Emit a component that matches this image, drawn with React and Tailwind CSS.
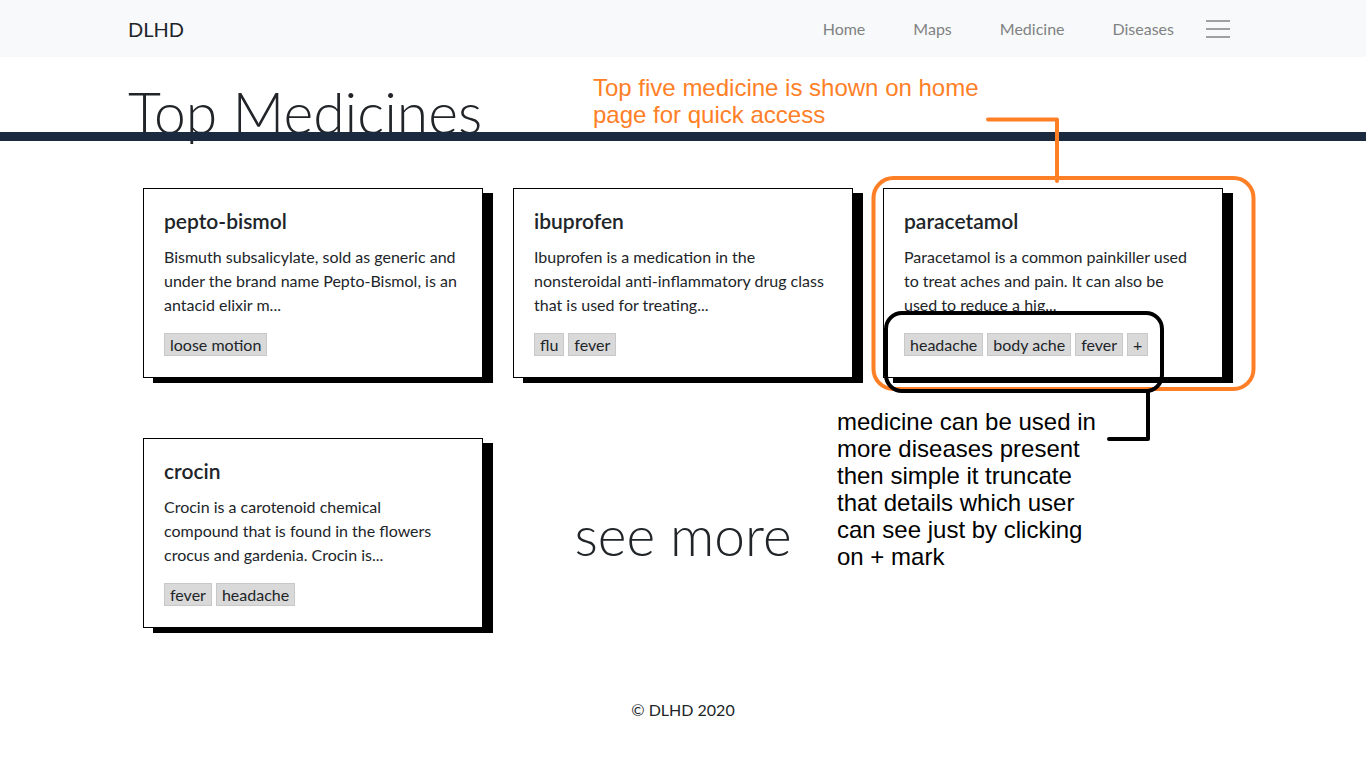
import React from 'react';

const medicines = [
  {
    name: 'pepto-bismol',
    lines: ['Bismuth subsalicylate, sold as generic and', 'under the brand name Pepto-Bismol, is an', 'antacid elixir m...'],
    tags: ['loose motion'],
  },
  {
    name: 'ibuprofen',
    lines: ['Ibuprofen is a medication in the', 'nonsteroidal anti-inflammatory drug class', 'that is used for treating...'],
    tags: ['flu', 'fever'],
  },
  {
    name: 'paracetamol',
    lines: ['Paracetamol is a common painkiller used', 'to treat aches and pain. It can also be', 'used to reduce a hig...'],
    tags: ['headache', 'body ache', 'fever', '+'],
  },
  {
    name: 'crocin',
    lines: ['Crocin is a carotenoid chemical', 'compound that is found in the flowers', 'crocus and gardenia. Crocin is...'],
    tags: ['fever', 'headache'],
  },
];

function MedicineCard({ med }) {
  return (
    <div className="h-[190px] w-[340px] border border-black bg-white px-5 pt-5 pb-[21px] shadow-[10px_5px_0_0_#000]">
      <h5 className="h-6 text-[21px] leading-6 font-semibold text-[#212529]">{med.name}</h5>
      <p className="mt-3 text-[16px] leading-6 whitespace-nowrap text-[#212529]">
        {med.lines.map((l, i) => (
          <span key={i} className="block">{l}</span>
        ))}
      </p>
      <div className="mt-4 flex gap-1">
        {med.tags.map((t) => (
          <span key={t} className="h-[23px] border border-[#c8c8c8] bg-[#d9d9d9] px-[5px] text-[16px] leading-[21px] text-[#212529]">
            {t}
          </span>
        ))}
      </div>
    </div>
  );
}

export default function App() {
  return (
    <div className="relative min-h-[768px] w-full bg-white font-['Lato','Open_Sans',sans-serif] text-[#212529]">
      {/* navbar */}
      <nav className="h-[57px] bg-[#f8f9fa]">
        <div className="mx-auto flex h-full w-[1110px] items-center justify-between">
          <span className="text-[20px] text-[#212529]">DLHD</span>
          <div className="flex items-center">
            <div className="flex gap-12 text-[16px] text-[#808283]">
              <a>Home</a>
              <a>Maps</a>
              <a>Medicine</a>
              <a>Diseases</a>
            </div>
            <button className="mr-2 ml-8 flex w-6 flex-col gap-[6px]">
              <span className="h-[2px] w-6 bg-[#a0a0a0]" />
              <span className="h-[2px] w-6 bg-[#a0a0a0]" />
              <span className="h-[2px] w-6 bg-[#a0a0a0]" />
            </button>
          </div>
        </div>
      </nav>

      {/* heading + bar */}
      <div className="mx-auto mt-[22px] h-[53px] w-[1110px]">
        <h1 className="text-[57px] leading-[67px] font-light text-[#212529]">Top Medicines</h1>
      </div>
      <div className="relative h-[9px] bg-[#1c2a3f]" />

      {/* cards */}
      <div className="mx-auto mt-[47px] w-[1110px] pl-[15px]">
        <div className="grid grid-cols-[340px_340px_340px] gap-x-[30px] gap-y-[60px]">
          <MedicineCard med={medicines[0]} />
          <MedicineCard med={medicines[1]} />
          <MedicineCard med={medicines[2]} />
          <MedicineCard med={medicines[3]} />
          <div className="flex items-center justify-center pt-1">
            <span className="text-[55px] font-light text-[#212529]">see more</span>
          </div>
        </div>
      </div>

      <footer className="mt-[70px] pb-10 text-center text-[16px] leading-6 text-[#212529]">© DLHD 2020</footer>

      {/* annotations drawn over the screenshot */}
      <div className="absolute top-[74px] left-[593px] font-['Liberation_Sans',Arial,sans-serif] text-[24px] leading-[27px] text-[#ff7f27]">
        <div>Top five medicine is shown on home</div>
        <div>page for quick access</div>
      </div>
      <div className="absolute top-[408px] left-[837px] font-['Liberation_Sans',Arial,sans-serif] text-[24px] leading-[27px] text-black">
        <div>medicine can be used in</div>
        <div>more diseases present</div>
        <div>then simple it truncate</div>
        <div>that details which user</div>
        <div>can see just by clicking</div>
        <div>on + mark</div>
      </div>
      <svg className="pointer-events-none absolute top-0 left-0" width="1366" height="768" fill="none">
        <path d="M988 119.5 H1057 V181" stroke="#ff7f27" strokeWidth="4" strokeLinecap="round" strokeLinejoin="round" />
        <rect x="873.5" y="178" width="380" height="211" rx="20" stroke="#ff7f27" strokeWidth="4" />
        <rect x="886" y="313" width="276" height="78" rx="16" stroke="#000" strokeWidth="4" />
        <path d="M1148 391 V439 H1109" stroke="#000" strokeWidth="4" strokeLinecap="round" strokeLinejoin="round" />
      </svg>
    </div>
  );
}
